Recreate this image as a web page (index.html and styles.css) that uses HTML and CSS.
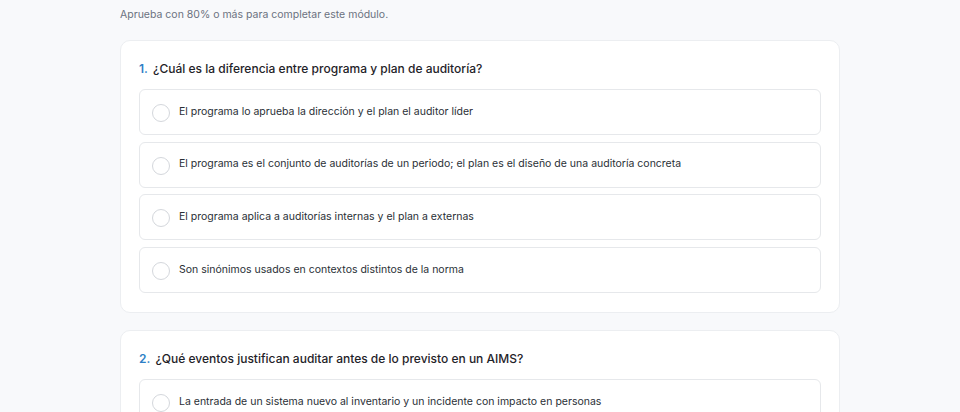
FILE: index.html
```html
<!DOCTYPE html>
<html lang="es">
<head>
<meta charset="utf-8">
<title>Cuestionario</title>
<link rel="stylesheet" href="styles.css">
</head>
<body>
<main class="page">
  <p class="intro">Aprueba con 80% o más para completar este módulo.</p>
  <section class="card">
    <h2 class="question"><span class="num">1.</span> ¿Cuál es la diferencia entre programa y plan de auditoría?</h2>
    <div class="options">
      <label class="option"><span class="radio"></span><span class="text">El programa lo aprueba la dirección y el plan el auditor líder</span></label>
      <label class="option"><span class="radio"></span><span class="text">El programa es el conjunto de auditorías de un periodo; el plan es el diseño de una auditoría concreta</span></label>
      <label class="option"><span class="radio"></span><span class="text">El programa aplica a auditorías internas y el plan a externas</span></label>
      <label class="option"><span class="radio"></span><span class="text">Son sinónimos usados en contextos distintos de la norma</span></label>
    </div>
  </section>
  <section class="card">
    <h2 class="question"><span class="num">2.</span> ¿Qué eventos justifican auditar antes de lo previsto en un AIMS?</h2>
    <div class="options">
      <label class="option"><span class="radio"></span><span class="text">La entrada de un sistema nuevo al inventario y un incidente con impacto en personas</span></label>
    </div>
  </section>
</main>
</body>
</html>
```
FILE: styles.css
```css
html, body {
  margin: 0;
  padding: 0;
}
body {
  background: #f8f9fb;
  font-family: Inter, "Noto Sans", sans-serif;
  color: #1f2937;
  height: 412px;
  overflow: hidden;
}
.page {
  width: 720px;
  margin: 0 auto;
  padding-top: 8px;
  display: flex;
  flex-direction: column;
  gap: 17px;
}
.intro {
  margin: -1px 0 0 0;
  font-size: 10.5px;
  line-height: 16px;
  color: #6b7280;
}
.card {
  background: #ffffff;
  border: 1px solid #eceef1;
  border-radius: 10px;
  padding: 20px 18px 19px 18px;
}
.question {
  margin: 0 0 12px 0;
  font-size: 12px;
  line-height: 16px;
  font-weight: 500;
  color: #1f2329;
}
.num {
  color: #2e7fc6;
  font-weight: 600;
  margin-right: 2px;
}
.options {
  display: flex;
  flex-direction: column;
  gap: 6.7px;
}
.option {
  display: flex;
  align-items: center;
  gap: 9px;
  height: 44px;
  padding: 0 12px;
  border: 1px solid #e6e8eb;
  border-radius: 6px;
  background: #ffffff;
}
.radio {
  width: 16px;
  height: 16px;
  border: 1.5px solid #d4d7dc;
  border-radius: 50%;
  flex: none;
  margin-top: 2px;
}
.text {
  font-size: 10.5px;
  line-height: 14px;
  color: #2a2f36;
  margin-top: -1px;
}
```
